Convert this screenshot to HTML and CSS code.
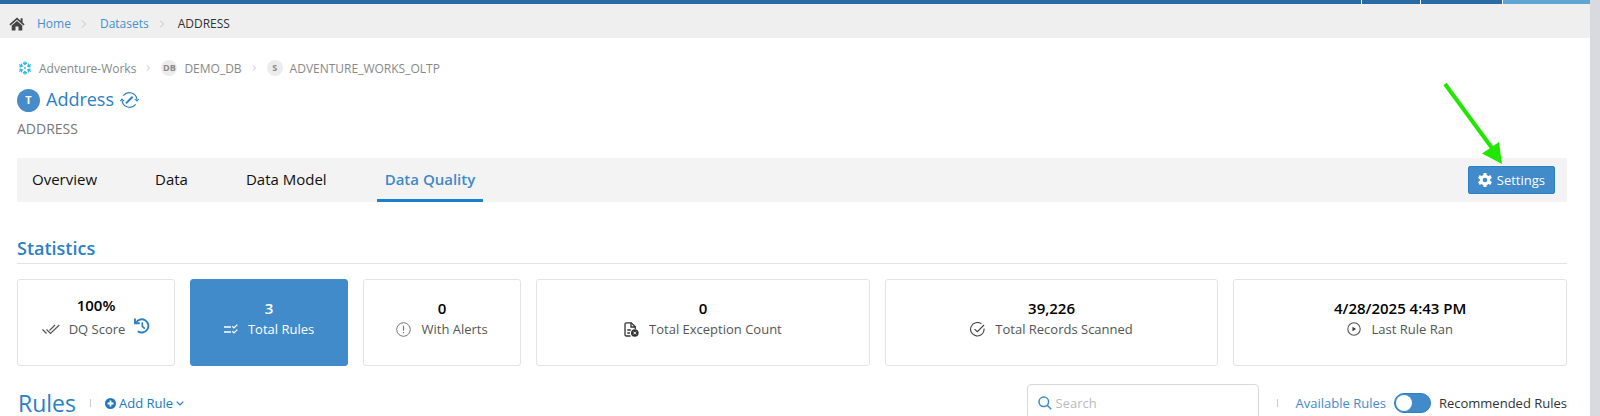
FILE: index.html
```html
<!DOCTYPE html>
<html lang="en">
<head>
    <meta charset="UTF-8">
    <meta name="viewport" content="width=device-width, initial-scale=1.0">
    <title>Address</title>
    <link rel="stylesheet" href="styles.css">
</head>
<body>
    <div class="page">
        <div class="topbar">
            <span class="topbar-main"></span>
            <span class="topbar-item"></span>
            <span class="topbar-item wide"></span>
            <span class="topbar-item active"></span>
        </div>
        <nav class="breadcrumb">
            <svg class="home" width="16" height="14" viewBox="0 0 16 14" fill="#444">
                <path d="M8 0.6 L0.4 7.2 L1.4 8.4 L8 2.7 L14.6 8.4 L15.6 7.2 L13.6 5.4 V1.2 H11.6 V3.7 Z"/>
                <path d="M8 3.9 L2.7 8.4 V13.4 H6.5 V9.4 H9.5 V13.4 H13.3 V8.4 Z"/>
            </svg>
            <a href="#">Home</a>
            <svg class="sep" width="6" height="8" viewBox="0 0 6 8"><path d="M1 0.5 L4.5 4 L1 7.5"/></svg>
            <a href="#">Datasets</a>
            <svg class="sep" width="6" height="8" viewBox="0 0 6 8"><path d="M1 0.5 L4.5 4 L1 7.5"/></svg>
            <span>ADDRESS</span>
        </nav>

        <main class="content">
            <div class="source">
                <svg width="14" height="14" viewBox="0 0 14 14" fill="none" stroke="#29b5e8" stroke-width="1.2" stroke-linecap="round" stroke-linejoin="round">
                    <g id="arm"><path d="M5.4 2 L7 3.7 L8.6 2 M7 0.7 V3.4"/></g>
                    <use href="#arm" transform="rotate(60 7 7)"/>
                    <use href="#arm" transform="rotate(120 7 7)"/>
                    <use href="#arm" transform="rotate(180 7 7)"/>
                    <use href="#arm" transform="rotate(240 7 7)"/>
                    <use href="#arm" transform="rotate(300 7 7)"/>
                    <circle cx="7" cy="7" r="0.4"/>
                </svg>
                <span>Adventure-Works</span>
                <svg class="sep" width="5" height="6" viewBox="0 0 5 6"><path d="M1 0.5 L3.5 3 L1 5.5"/></svg>
                <span class="tag">DB</span>
                <span>DEMO_DB</span>
                <svg class="sep" width="5" height="6" viewBox="0 0 5 6"><path d="M1 0.5 L3.5 3 L1 5.5"/></svg>
                <span class="tag">S</span>
                <span>ADVENTURE_WORKS_OLTP</span>
            </div>
            <div class="title">
                <span class="badge">T</span>
                <h1>Address</h1>
                <svg width="19" height="18" viewBox="0 0 19 18" fill="none" stroke="#2a80c5" stroke-width="1.1">
                    <path d="M3.3 4.6 A7.7 7.7 0 0 1 17 8.6 M15.7 13.4 A7.7 7.7 0 0 1 2 9.4"/>
                    <path d="M0.4 10.2 L2 8 L4 10 M15 8.2 L17 10 L18.6 8"/>
                    <path d="M6 12.4 L12.6 5.8" stroke-width="2"/>
                </svg>
            </div>
            <div class="subtitle">ADDRESS</div>

            <div class="tabs">
                <a class="tab" href="#">Overview</a>
                <a class="tab" href="#">Data</a>
                <a class="tab" href="#">Data Model</a>
                <a class="tab selected" href="#">Data Quality</a>
                <button class="settings" type="button">
                    <svg width="14" height="14" viewBox="0 0 14 14" fill="none" stroke="#fff">
                        <circle cx="7" cy="7" r="3.8" stroke-width="3"/>
                        <path stroke-width="3.2" d="M7 0 V3 M7 11 V14 M0.9 3.5 L3.5 5 M10.5 9 L13.1 10.5 M0.9 10.5 L3.5 9 M10.5 5 L13.1 3.5"/>
                    </svg>
                    Settings
                </button>
            </div>

            <h2>Statistics</h2>
            <div class="cards">
                <div class="card">
                    <div class="value">100%</div>
                    <div class="label tall">
                        <svg width="18" height="11" viewBox="0 0 18 11" fill="none" stroke="#555" stroke-width="1.2">
                            <path d="M0.5 5.5 L4.5 9.5 M4.5 5.5 L8.5 9.5 L17.3 1 M7.5 6.5 L13 1"/>
                        </svg>
                        <span>DQ Score</span>
                        <svg class="history" width="16" height="16" viewBox="0 0 16 16" fill="none" stroke="#2a80c5" stroke-width="1.9">
                            <path d="M2.2 4.4 A6.6 6.6 0 1 1 3.8 13.2"/>
                            <path d="M1 0.5 V5.2 H5.8"/>
                            <path d="M8.3 4.2 V8.4 L10.8 10.6" stroke-width="1.6"/>
                        </svg>
                    </div>
                </div>
                <div class="card selected">
                    <div class="value">3</div>
                    <div class="label">
                        <svg width="14" height="10" viewBox="0 0 14 10" fill="none" stroke="#fff" stroke-width="1.3">
                            <path d="M0 3 H7 M0 8 H7 M8.3 2.2 L10 3.9 L13.3 0.6 M8.3 7.2 L10 8.9 L13.3 5.6"/>
                        </svg>
                        <span>Total Rules</span>
                    </div>
                </div>
                <div class="card">
                    <div class="value">0</div>
                    <div class="label">
                        <svg width="15" height="15" viewBox="0 0 15 15" fill="none" stroke="#777">
                            <circle cx="7.5" cy="7.5" r="6.8"/>
                            <path d="M7.5 3.7 V8.7 M7.5 10 V11.3" stroke-width="1.2"/>
                        </svg>
                        <span>With Alerts</span>
                    </div>
                </div>
                <div class="card">
                    <div class="value">0</div>
                    <div class="label">
                        <svg width="15" height="15" viewBox="0 0 15 15" fill="none" stroke="#333" stroke-width="1.3">
                            <path d="M6.5 14 H2.5 Q1 14 1 12.5 V2.2 Q1 0.8 2.5 0.8 H7.2 L11.3 4.8 V7"/>
                            <path d="M7 0.8 V5 H11.3 M3.3 8 H6.8 M3.3 11 H6"/>
                            <circle cx="10.8" cy="11" r="3.8" fill="#333" stroke="none"/>
                            <path d="M9.4 9.6 L12.2 12.4 M12.2 9.6 L9.4 12.4" stroke="#fff" stroke-width="1"/>
                        </svg>
                        <span>Total Exception Count</span>
                    </div>
                </div>
                <div class="card">
                    <div class="value">39,226</div>
                    <div class="label">
                        <svg width="15" height="15" viewBox="0 0 16 16" fill="none" stroke="#444" stroke-width="1.2">
                            <path d="M12.2 2 A7.2 7.2 0 1 0 15 7"/>
                            <path d="M4.8 7.5 L7.8 10.4 L15 3.2"/>
                        </svg>
                        <span>Total Records Scanned</span>
                    </div>
                </div>
                <div class="card">
                    <div class="value">4/28/2025 4:43 PM</div>
                    <div class="label">
                        <svg width="14" height="14" viewBox="0 0 14 14" fill="none" stroke="#555" stroke-width="1.1">
                            <circle cx="7" cy="7" r="6.2"/>
                            <path d="M5.5 4.7 L9 7 L5.5 9.3 Z" fill="#333" stroke="none"/>
                        </svg>
                        <span>Last Rule Ran</span>
                    </div>
                </div>
            </div>

            <div class="rules">
                <h3>Rules</h3>
                <span class="divider"></span>
                <button class="add" type="button">
                    <svg width="11" height="11" viewBox="0 0 11 11">
                        <circle cx="5.5" cy="5.5" r="5.5" fill="#2178bd"/>
                        <path d="M5.5 2.5 V8.5 M2.5 5.5 H8.5" stroke="#fff" stroke-width="1.8"/>
                    </svg>
                    <span>Add Rule</span>
                    <svg width="8" height="5" viewBox="0 0 8 5" fill="none" stroke="#2178bd" stroke-width="1.2"><path d="M0.7 0.7 L4 4 L7.3 0.7"/></svg>
                </button>
                <label class="search">
                    <svg width="14" height="14" viewBox="0 0 14 14" fill="none" stroke="#3f89ca" stroke-width="1.5">
                        <circle cx="5.8" cy="5.8" r="4.8"/>
                        <path d="M9.2 9.2 L13.2 13.2"/>
                    </svg>
                    <input type="text" placeholder="Search" aria-label="Search">
                </label>
                <span class="divider"></span>
                <label class="available" for="recommended">Available Rules</label>
                <input class="toggle" type="checkbox" id="recommended">
                <label for="recommended">Recommended Rules</label>
            </div>
        </main>

        <svg class="pointer" width="62" height="84" viewBox="0 0 62 84">
            <path d="M2 2 L49 66" stroke="#22e600" stroke-width="4"/>
            <path d="M59 82 L39 71.5 L56 60 Z" fill="#22e600"/>
        </svg>
    </div>
</body>
</html>
```
FILE: styles.css
```css
* {
    box-sizing: border-box;
}
body {
    margin: 0;
    background-color: #fff;
    color: #333;
    font-family: "Open Sans", "Noto Sans", sans-serif;
    font-size: 13px;
}
a {
    text-decoration: none;
}
svg {
    flex-shrink: 0;
}
button,
input {
    font-family: inherit;
    font-size: 13px;
}
.page {
    position: relative;
    height: 100vh;
    overflow: hidden;
    border-right: 10px solid #d9dadf;
}
.topbar {
    display: flex;
    gap: 1px;
    height: 4px;
}
.topbar span {
    background-color: #2a6ba4;
}
.topbar .topbar-main {
    flex: 1;
}
.topbar .topbar-item {
    width: 58px;
}
.topbar .wide {
    width: 81px;
}
.topbar .active {
    width: 87px;
    background-color: #5fa6d3;
}
.breadcrumb {
    display: flex;
    align-items: center;
    height: 34px;
    padding: 5px 0 0 9px;
    background-color: #efefef;
    font-size: 12px;
}
.breadcrumb a {
    color: #4590cd;
}
.breadcrumb .home {
    margin-right: 12px;
}
.breadcrumb .sep {
    margin: 0 13px 0 10px;
}
.sep {
    fill: none;
    stroke: #c4c4c4;
}
.content {
    padding: 20px 23px 0 17px;
}
.source {
    display: flex;
    align-items: center;
    height: 20px;
    padding-left: 1px;
    color: #888;
    font-size: 12px;
}
.source > svg:first-child {
    margin-right: 7px;
}
.source .sep {
    margin: 0 10px;
}
.tag {
    width: 16px;
    height: 16px;
    margin-right: 7px;
    border-radius: 50%;
    background-color: #ececec;
    font-size: 9px;
    font-weight: 700;
    line-height: 16px;
    text-align: center;
}
.title {
    display: flex;
    align-items: center;
    height: 28px;
    margin-top: 8px;
}
.badge {
    width: 23px;
    height: 23px;
    margin-right: 6px;
    border-radius: 50%;
    background-color: #468cca;
    color: #fff;
    font-size: 11px;
    font-weight: 700;
    line-height: 22px;
    text-align: center;
}
h1,
h2,
h3 {
    margin: 0;
    color: #2a80c5;
    font-weight: 500;
}
h1 {
    margin-right: 6px;
    padding-bottom: 2px;
    font-size: 18px;
    line-height: 24px;
}
.subtitle {
    margin-top: 5px;
    color: #777;
    font-size: 14px;
    line-height: 20px;
}
.tabs {
    display: flex;
    align-items: center;
    gap: 42px;
    height: 44px;
    margin-top: 19px;
    padding: 0 12px 0 7px;
    background-color: #f3f3f3;
}
.tab {
    padding: 0 8px;
    border-bottom: 3px solid transparent;
    color: #111;
    font-size: 15px;
    line-height: 40px;
}
.tab.selected {
    border-color: #1c80cf;
    color: #3f89ca;
    font-weight: 600;
}
.settings {
    display: flex;
    align-items: center;
    gap: 5px;
    height: 28px;
    margin-left: auto;
    padding: 0 9px;
    border: 1px solid #2a80c5;
    border-radius: 2px;
    background-color: #428bca;
    color: #fff;
}
h2 {
    margin-top: 34px;
    padding-bottom: 3px;
    border-bottom: 1px solid #e4e4e4;
    font-size: 18px;
    font-weight: 600;
    line-height: 24px;
}
.cards {
    display: grid;
    grid-template-columns: repeat(3, 9fr) repeat(3, 19fr);
    gap: 15px;
    margin-top: 15px;
}
.card {
    display: flex;
    flex-direction: column;
    align-items: center;
    justify-content: center;
    height: 87px;
    padding-bottom: 7px;
    border: 1px solid #e4e4e4;
    border-radius: 3px;
}
.value {
    color: #000;
    font-size: 15px;
    font-weight: 600;
    line-height: 20px;
}
.label {
    display: flex;
    align-items: center;
    gap: 10px;
    height: 22px;
    color: #555;
}
.label.tall {
    gap: 9px;
    height: 28px;
}
.history {
    margin-bottom: 6px;
}
.card.selected {
    border-color: #428bca;
    background-color: #428bca;
}
.card.selected .value,
.card.selected .label {
    color: #fff;
}
.rules {
    display: flex;
    align-items: center;
    height: 38px;
    margin-top: 18px;
    padding-left: 1px;
}
h3 {
    font-size: 23px;
    line-height: 24px;
}
.divider {
    width: 1px;
    height: 8px;
    margin: 0 14px;
    background-color: #ccc;
}
.add {
    display: flex;
    align-items: center;
    gap: 3px;
    padding: 0;
    border: none;
    background: none;
    color: #2178bd;
}
.search {
    display: flex;
    align-items: center;
    gap: 4px;
    width: 232px;
    height: 38px;
    margin-left: auto;
    margin-right: 4px;
    padding: 0 10px;
    border: 1px solid #d8d8d8;
    border-radius: 4px;
}
.search input {
    width: 100%;
    padding: 0;
    border: none;
    outline: none;
}
.search input::placeholder {
    color: #bbb;
}
.available {
    margin-left: 4px;
    color: #428bca;
}
.toggle {
    appearance: none;
    width: 37px;
    height: 20px;
    margin: 0 8px;
    padding: 1px;
    border: 1px solid #2a80c5;
    border-radius: 10px;
    background-color: #428bca;
}
.toggle::before {
    content: "";
    display: block;
    width: 16px;
    height: 16px;
    border-radius: 50%;
    background-color: #fff;
}
.toggle:checked::before {
    margin-left: auto;
}
/* arrow over the Settings button */
.pointer {
    position: absolute;
    top: 82px;
    right: 85px;
}
```
